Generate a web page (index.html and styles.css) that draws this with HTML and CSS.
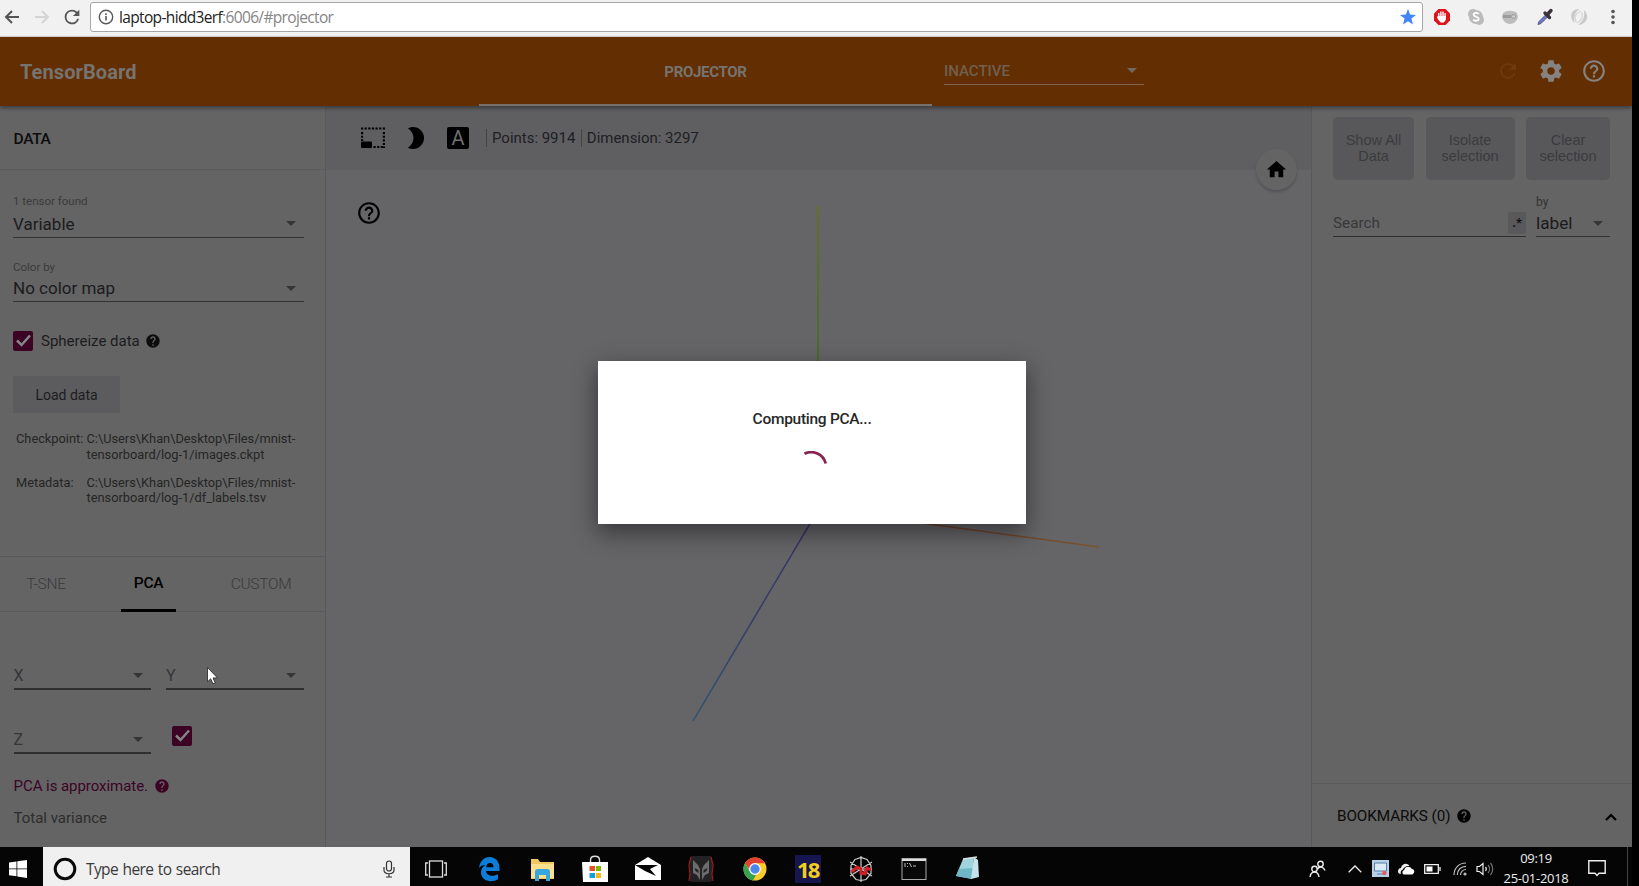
FILE: index.html
```html
<!DOCTYPE html>
<html lang="en">
<head>
<meta charset="utf-8">
<title>TensorBoard</title>
<link rel="stylesheet" href="styles.css">
</head>
<body>
<svg class="defs" width="0" height="0">
  <symbol id="help" viewBox="0 0 24 24"><path d="M12 2C6.48 2 2 6.48 2 12s4.48 10 10 10 10-4.48 10-10S17.52 2 12 2zm1 17h-2v-2h2v2zm2.07-7.75l-.9.92C13.45 12.9 13 13.5 13 15h-2v-.5c0-1.1.45-2.1 1.17-2.83l1.24-1.26c.37-.36.59-.86.59-1.41 0-1.1-.9-2-2-2s-2 .9-2 2H8c0-2.21 1.79-4 4-4s4 1.79 4 4c0 .88-.36 1.68-.93 2.25z"/></symbol>
  <symbol id="help-outline" viewBox="0 0 24 24"><path d="M11 18h2v-2h-2v2zm1-16C6.48 2 2 6.48 2 12s4.48 10 10 10 10-4.48 10-10S17.52 2 12 2zm0 18c-4.41 0-8-3.59-8-8s3.59-8 8-8 8 3.59 8 8-3.59 8-8 8zm0-14c-2.21 0-4 1.79-4 4h2c0-1.1.9-2 2-2s2 .9 2 2c0 2-3 1.75-3 5h2c0-2.25 3-2.5 3-5 0-2.21-1.79-4-4-4z"/></symbol>
  <symbol id="caret" viewBox="0 0 10 5"><path d="M0 0h10L5 5z"/></symbol>
  <symbol id="refresh" viewBox="0 0 24 24"><path d="M17.65 6.35A7.96 7.96 0 0 0 12 4a8 8 0 1 0 7.73 10h-2.08A6 6 0 1 1 12 6c1.66 0 3.14.69 4.22 1.78L13 11h7V4l-2.35 2.35z"/></symbol>
  <symbol id="check" viewBox="0 0 20 20"><path d="M4 9.500l4.500 4.500 8.500-9.500" fill="none" stroke="#858585" stroke-width="2.500"/></symbol>
</svg>
<div class="screen">
  <div class="browser">
    <svg class="nav" width="20" height="20" viewBox="0 0 20 20"><path d="M17 10H4M10 4l-6 6 6 6" fill="none" stroke="#555" stroke-width="2"/></svg>
    <svg class="nav" width="20" height="20" viewBox="0 0 20 20"><path d="M3 10h13M10 4l6 6-6 6" fill="none" stroke="#d4d4d4" stroke-width="2"/></svg>
    <svg class="nav reload" width="22" height="22"><use href="#refresh"/></svg>
    <div class="address">
      <svg width="16" height="16" viewBox="0 0 16 16" fill="none" stroke="#5a5a5a"><circle cx="8" cy="8" r="6.7" stroke-width="1.4"/><path d="M8 7v4.5M8 4.2v1.7" stroke-width="1.6"/></svg>
      <span class="url">laptop-hidd3erf<i>:6006/#projector</i></span>
      <svg class="star" width="16" height="16" viewBox="0 0 16 16"><path d="M8 0l2.2 5.6 5.8.3-4.6 3.7L13 15.600 8 12.300 3 15.600l1.600-6L0 5.900l5.800-.3z" fill="#4285f4"/></svg>
    </div>
    <div class="extensions">
      <svg width="18" height="18" viewBox="0 0 18 18"><path d="M5.500 1h7L17 5.500v7L12.500 17h-7L1 12.500v-7z" fill="#e0121c"/><path d="M5.800 9V5.500M7.900 9V4M10 9V4M12.100 10V5.500" stroke="#fff" stroke-width="1.400" stroke-linecap="round"/><path d="M5.100 8h7.700v4l-2 2.600H7.700L5.100 11.500 3.800 9z" fill="#fff"/></svg>
      <svg width="18" height="18" viewBox="0 0 18 18"><circle cx="6" cy="6" r="5" fill="#bbb"/><circle cx="12" cy="12" r="5" fill="#bbb"/><circle cx="9" cy="9" r="7" fill="#bbb"/><path d="M11.700 6C10.500 4.200 6.500 4.500 6.700 6.800c.2 2.500 5 1.500 5 4 0 2.300-4.300 2.600-5.400.7" fill="none" stroke="#fff" stroke-width="1.800"/></svg>
      <svg width="18" height="18" viewBox="0 0 18 18"><path d="M2 5c4-3 10-3 14 0l1 4c-1 4-4 7-8 7S2 13 1 9z" fill="#bdbdbd"/><path d="M2 8.500h8" stroke="#9c9c9c" stroke-width="3"/><circle cx="12.500" cy="8.500" r="2" fill="#ccc" stroke="#999"/></svg>
      <svg width="18" height="18" viewBox="0 0 18 18"><path d="M2 16.500l1-3 6.500-6.500 2 2L5 15.500z" fill="#6c78cf" stroke="#555b80"/><path d="M9 5l4.500 4.500M11 7l4-4.500" stroke="#3a3238" stroke-width="3.400" stroke-linecap="round"/></svg>
      <svg width="18" height="18" viewBox="0 0 18 18" fill="#cacaca"><path d="M9.500 1C0 1-1 10 4.500 15 4 9 4.500 4.500 9.500 1z"/><path d="M8 17c9-.5 12-10 6-15 1 7-1 11.500-6 15z"/><path d="M6 14c-2-5 0-9 5-11M11.500 4c2 5 0 9-5 11" fill="none" stroke="#d8d8d8" stroke-width="1.300"/></svg>
      <svg width="18" height="18" viewBox="0 0 18 18" fill="#555"><circle cx="9" cy="3.500" r="1.800"/><circle cx="9" cy="9" r="1.800"/><circle cx="9" cy="14.500" r="1.800"/></svg>
    </div>
  </div>

  <header class="topbar">
    <div class="brand">TensorBoard</div>
    <div class="tab">PROJECTOR</div>
    <div class="inactive"><span>INACTIVE</span><svg width="10" height="5"><use href="#caret"/></svg></div>
    <div class="actions">
      <svg class="dim" width="24" height="24"><use href="#refresh"/></svg>
      <svg width="26" height="26" viewBox="0 0 24 24"><path d="M19.430 12.980c.04-.32.07-.64.07-.98s-.03-.66-.07-.98l2.110-1.650c.19-.15.24-.42.12-.64l-2-3.460c-.12-.22-.39-.3-.61-.22l-2.490 1c-.52-.4-1.080-.73-1.690-.98l-.38-2.650C14.460 2.180 14.250 2 14 2h-4c-.25 0-.46.180-.49.420l-.38 2.650c-.61.25-1.170.59-1.690.98l-2.490-1c-.23-.09-.49 0-.61.22l-2 3.460c-.13.22-.07.49.12.64l2.110 1.650c-.04.32-.07.65-.07.98s.03.66.07.98l-2.110 1.650c-.19.15-.24.42-.12.64l2 3.460c.12.22.39.3.61.22l2.490-1c.52.4 1.080.73 1.690.98l.38 2.650c.03.24.24.42.49.42h4c.25 0 .46-.18.49-.42l.38-2.650c.61-.25 1.170-.59 1.690-.98l2.490 1c.23.09.49 0 .61-.22l2-3.460c.12-.22.07-.49-.12-.64l-2.110-1.650zM12 15.500c-1.930 0-3.500-1.570-3.500-3.500s1.570-3.500 3.500-3.500 3.500 1.570 3.500 3.500-1.570 3.500-3.500 3.500z"/></svg>
      <svg width="26" height="26"><use href="#help-outline"/></svg>
    </div>
  </header>

  <main class="workspace">
    <aside class="left">
      <h2 class="panel-title">DATA</h2>
      <div class="data">
        <label class="caption">1 tensor found</label>
        <div class="select"><span>Variable</span><svg width="10" height="5"><use href="#caret"/></svg></div>
        <label class="caption second">Color by</label>
        <div class="select"><span>No color map</span><svg width="10" height="5"><use href="#caret"/></svg></div>
        <div class="sphere"><span class="box"><svg width="20" height="20"><use href="#check"/></svg></span><span class="sphere-text">Sphereize data</span><svg class="q" width="16" height="16"><use href="#help"/></svg></div>
        <div class="load">Load data</div>
        <dl class="files">
          <dt>Checkpoint:</dt><dd>C:\Users\Khan\Desktop\Files/mnist-<br>tensorboard/log-1/images.ckpt</dd>
          <dt>Metadata:</dt><dd>C:\Users\Khan\Desktop\Files/mnist-<br>tensorboard/log-1/df_labels.tsv</dd>
        </dl>
      </div>
      <nav class="tabs"><span class="t1">T-SNE</span><span class="t2">PCA</span><span class="t3">CUSTOM</span></nav>
      <div class="pca">
        <div class="axes">
          <div class="select axis"><span>X</span><svg width="10" height="5"><use href="#caret"/></svg></div>
          <div class="select axis"><span>Y</span><svg width="10" height="5"><use href="#caret"/></svg></div>
          <div class="select axis"><span>Z</span><svg width="10" height="5"><use href="#caret"/></svg></div>
          <span class="box z"><svg width="20" height="20"><use href="#check"/></svg></span>
        </div>
        <div class="approx"><span>PCA is approximate.</span><svg class="q" width="16" height="16"><use href="#help"/></svg></div>
        <div class="variance">Total variance</div>
      </div>
    </aside>

    <section class="center">
      <div class="tools">
        <svg width="24" height="22" viewBox="0 0 24 22"><path d="M0 1.500h24" stroke="#000" stroke-width="2.200" stroke-dasharray="2.200 1.430"/><path d="M1.100 5v9M22.900 5v16" stroke="#000" stroke-width="2.200" stroke-dasharray="2.200 1.430"/><path d="M12.500 20h11" stroke="#000" stroke-width="2.200" stroke-dasharray="2.200 1.430"/><rect y="14.500" width="11" height="6.500" rx="1"/></svg>
        <svg class="moon" width="16" height="22" viewBox="0 0 16 22"><path d="M0 1.300C2 .3 3.500 0 5 0a11 11 0 0 1 0 22c-1.500 0-3-.3-5-1.300C3.300 18.500 5.500 15 5.500 11S3.300 3.500 0 1.300z"/></svg>
        <span class="letter">A</span>
        <span class="stat">Points: 9914</span><span class="stat">Dimension: 3297</span>
      </div>
      <svg class="plot" width="985" height="678" viewBox="0 0 985 678">
        <defs>
          <linearGradient id="gy" x1="0" y1="36" x2="0" y2="340" gradientUnits="userSpaceOnUse"><stop offset="0" stop-color="#66701f"/><stop offset=".5" stop-color="#436d24"/><stop offset="1" stop-color="#2f6d2a"/></linearGradient>
          <linearGradient id="gb" x1="491" y1="341" x2="367" y2="551" gradientUnits="userSpaceOnUse"><stop offset="0" stop-color="#38306a"/><stop offset=".5" stop-color="#343b66"/><stop offset="1" stop-color="#325670"/></linearGradient>
          <linearGradient id="go" x1="600" y1="0" x2="773" y2="0" gradientUnits="userSpaceOnUse"><stop offset="0" stop-color="#67392a"/><stop offset="1" stop-color="#7a532b"/></linearGradient>
        </defs>
        <path d="M492 36V340" stroke="url(#gy)" stroke-width="1.800"/>
        <path d="M491.500 341L367 551" stroke="url(#gb)" stroke-width="1.500"/>
        <path d="M491 339L773 377" stroke="url(#go)" stroke-width="1.500"/>
      </svg>
      <svg class="guide" width="26" height="26"><use href="#help-outline"/></svg>
      <span class="home"><svg width="23" height="23" viewBox="0 0 24 24"><path d="M10 20v-6h4v6h5v-8h3L12 3 2 12h3v8z"/></svg></span>
    </section>

    <aside class="right">
      <div class="buttons"><span>Show All<br>Data</span><span>Isolate<br>selection</span><span>Clear<br>selection</span></div>
      <div class="query">
        <div class="search"><span>Search</span><b>.*</b></div>
        <div class="by"><label>by</label><div class="select"><span>label</span><svg width="10" height="5"><use href="#caret"/></svg></div></div>
      </div>
      <div class="bookmarks"><span>BOOKMARKS (0)</span><svg class="q" width="16" height="16"><use href="#help"/></svg><svg class="chev" width="12" height="8" viewBox="0 0 12 8"><path d="M1 7l5-5 5 5" fill="none" stroke="#000" stroke-width="2.200"/></svg></div>
    </aside>
  </main>

  <div class="dialog">
    <p>Computing PCA...</p>
    <svg width="30" height="30" viewBox="0 0 30 30"><path d="M7.500 2.800A15 15 0 0 1 28.700 12.500" fill="none" stroke="#872452" stroke-width="2.800"/></svg>
  </div>
  <svg class="cursor" width="12" height="18" viewBox="0 0 12 18"><path d="M.5.5v14.300l3.200-3 2.300 5 2.200-1-2.200-4.900h4.500z" fill="#fff" stroke="#222" stroke-width=".8"/></svg>
</div>

<footer class="taskbar">
  <div class="start"><svg width="18" height="18" viewBox="0 0 18 18" fill="#fff"><path d="M0 2.500l7.500-1v7H0zM8.300 1.300L18 0v8.500H8.300zM0 9.300h7.500v7L0 15.300zM8.300 9.300H18V18l-9.700-1.400z"/></svg></div>
  <div class="find">
    <svg width="24" height="24" viewBox="0 0 24 24"><circle cx="12" cy="12" r="9.800" fill="none" stroke="#0a0a0a" stroke-width="3"/></svg>
    <span>Type here to search</span>
    <svg class="mic" width="12" height="18" viewBox="0 0 12 18" fill="none" stroke="#333" stroke-width="1.200"><rect x="3.500" y="1" width="5" height="10" rx="2.500"/><path d="M1 7v3c0 5 10 5 10 0V7M6 14v3M3 17h6"/></svg>
  </div>
  <div class="apps">
    <svg width="26" height="26" viewBox="0 0 26 26" fill="none" stroke="#ddd" stroke-width="1.300"><rect x="6.500" y="5" width="13" height="16"/><path d="M5 7H2.700v12H5M21 7h2.300v12H21"/></svg>
    <svg width="26" height="26" viewBox="0 0 26 26"><path d="M3 12C4 5 8 1 13.500 1 20 1 23.500 6 23.500 12v3H10c.2 3.200 3 4.700 6 4.700 2.500 0 4.500-.6 6-1.500v5C16 27 4.500 25.500 5 16c.2-3 1.800-5.500 4.500-7C6.500 9 4.300 10.300 3 12zm7.200-.8h7.300c0-3-1.300-4.200-3.500-4.200s-3.500 1.500-3.800 4.200z" fill="#0d7dd8"/></svg>
    <svg width="26" height="26" viewBox="0 0 26 26"><path d="M2 3h7l2 3h14v17H2z" fill="#f0c860"/><path d="M2 8h23v14H2z" fill="#fbe08e"/><path d="M6 25v-9a3 3 0 0 1 3-3h9a3 3 0 0 1 3 3v9h-4v-6h-7v6z" fill="#35a6e0"/></svg>
    <svg width="26" height="28" viewBox="0 0 26 28"><path d="M8.500 8V5c0-5 9-5 9 0v3" fill="none" stroke="#ddd" stroke-width="1.400"/><path d="M0 7h26v20H1z" fill="#fff"/><path d="M7.500 11H13v5H7.500z" fill="#e55125"/><path d="M14 11h5v5h-5z" fill="#7eb900"/><path d="M7.500 18H13v5H7.500z" fill="#159ee0"/><path d="M14 18h5v5h-5z" fill="#fbba13"/></svg>
    <svg width="26" height="26" viewBox="0 0 26 26"><path d="M0 9L13 1l13 8v15H0z" fill="#fff"/><path d="M0 9h23l-8 4 6 7-11-5z" fill="#050505"/></svg>
    <svg width="26" height="26" viewBox="0 0 26 26"><path d="M2 1l2-1h18l2 1v24l-2 1H4l-2-1z" fill="#222224"/><path d="M3 1L1 9l1 9-1 7M23 1l2 8-1 9 1 7" fill="none" stroke="#a21a20" stroke-width="1.200"/><path d="M5 4l5 5 2 4v11l-3-5-4-2zM21 4l-5 5-2 4v11l3-5 4-2z" fill="#6c6c6c"/><path d="M6.500 12l4 2v3l-3-2zM19.500 12l-4 2v3l3-2z" fill="#222"/></svg>
    <svg width="26" height="26" viewBox="0 0 26 26"><circle cx="13" cy="13" r="11.500" fill="#fccb28"/><path d="M3 7.200A11.500 11.500 0 0 1 23 7.300H13l-5 7z" fill="#df4132"/><path d="M3 7.200l5.500 9.300 6 1.500-3.500 6.400A11.500 11.500 0 0 1 3 7.200z" fill="#35a252"/><circle cx="13" cy="13" r="5.300" fill="#4d87ed" stroke="#fff" stroke-width="1.200"/></svg>
    <span class="eighteen">18</span>
    <svg width="26" height="28" viewBox="0 0 26 28"><g fill="none" stroke="#ccc" stroke-width="1.200"><path d="M13 1v26M2 7l22 14M24 7L2 21M2 14h22M7 4.500l6-2 6 2 4 6v8l-5 6-5 1-5-1-5-6v-8z"/></g><path d="M4 17l5-5 4 2v4l4 1 2-6 4 2" fill="none" stroke="#d51c24" stroke-width="3"/></svg>
    <svg width="26" height="24" viewBox="0 0 26 24"><rect x="1" y="1.500" width="24" height="21" fill="#080808" stroke="#aaa"/><path d="M1 3h24" stroke="#ddd" stroke-width="2"/><path d="M4 6v4M6.500 6v1M6.500 9v1M8.500 6l2 4M12 9h3" stroke="#bbb"/></svg>
    <svg width="26" height="26" viewBox="0 0 26 26"><path d="M9 3l11-2-2 22-16-3z" fill="#9fd4df"/><path d="M5 13l14-1-1 11-16-3z" fill="#6fb6c6"/><path d="M20 1l4 3 1 17-8 2z" fill="#c5e3e8"/><path d="M9 3l14-2" stroke="#ddd" stroke-width="1.500"/></svg>
  </div>
  <div class="tray">
    <svg class="people" width="18" height="18" viewBox="0 0 18 18" fill="none" stroke="#eee" stroke-width="1.400"><circle cx="11.500" cy="4" r="2.700"/><path d="M8.500 9c2-3 6-2.500 7.500 1.500"/><circle cx="5.500" cy="9" r="2.700"/><path d="M1 17c1-6.500 8-6.500 9 0"/></svg>
    <svg class="up" width="14" height="8" viewBox="0 0 14 8"><path d="M.7 7.300L7 1l6.300 6.300" fill="none" stroke="#eee" stroke-width="1.300"/></svg>
    <svg class="rec" width="17" height="17" viewBox="0 0 17 17"><path d="M0 0h17v17H0z" fill="#b6d0ea"/><path d="M2.500 3h12v8h-12zM5 14h7" fill="#dbe9f6" stroke="#5a7ea5"/><circle cx="12.500" cy="13" r="2.200" fill="#e55b60"/></svg>
    <svg class="cloud" width="17" height="12" viewBox="0 0 17 12"><path d="M0 8.500C0 6 1.500 5 3 5c.5-4 6-6 8.500-2C7 3 5.500 5 5 6.500 3 7 2.500 8.500 2.800 11 1 11 0 10 0 8.500z" fill="#eee"/><path d="M5.500 11.500a2.500 2.500 0 0 1 .8-4.500c.6-4 6-4 7.200-1.200a2.900 2.900 0 0 1 .7 5.700z" fill="#fff"/></svg>
    <svg class="bat" width="17" height="10" viewBox="0 0 17 10"><path d="M.7.700h13.600v8.600H.7zM16 3v4" fill="none" stroke="#eee" stroke-width="1.300"/><path d="M2.500 2.500h6v5h-6z" fill="#fff"/></svg>
    <svg class="wifi" width="14" height="14" viewBox="0 0 14 14" fill="none" stroke="#bbb" stroke-width="1.200"><path d="M1 13C1 6 6 1 13 1M4.300 13c0-5 3.700-8.700 8.700-8.700M7.500 13c0-3 2.500-5.500 5.500-5.500"/><circle cx="12" cy="12" r="1" fill="#eee"/></svg>
    <svg class="vol" width="18" height="14" viewBox="0 0 18 14" fill="none" stroke="#eee" stroke-width="1.200"><path d="M1 4.500h2.500L7 1.500v11L3.500 9.500H1z"/><path d="M9.500 5c1 1.200 1 2.800 0 4"/><path d="M12 3c2 2.300 2 5.700 0 8M14.500 1c3 3.500 3 8.500 0 12" stroke="#777"/></svg>
    <div class="clock"><span>09:19</span><span>25-01-2018</span></div>
    <svg class="note" width="18" height="17" viewBox="0 0 18 17"><path d="M.8.800h16.400v12.400H11L9 15.500 7 13.200H.8z" fill="none" stroke="#eee" stroke-width="1.400"/></svg>
  </div>
</footer>
</body>
</html>
```
FILE: styles.css
```css
* { box-sizing: border-box; }
body { margin: 0; width: 1639px; height: 886px; overflow: hidden; background: #000; font-family: Roboto, "Liberation Sans", sans-serif; color: #1c1c1e; }
svg { display: block; flex: none; }
.defs { position: absolute; }
.screen { position: relative; width: 1632px; height: 847px; display: flex; flex-direction: column; background: #646464; white-space: nowrap; }

/* Browser chrome */
.browser { height: 37px; background: #f2f1f2; border-bottom: 1px solid #d5d5d5; display: flex; align-items: center; padding: 0 0 2px 2px; }
.nav { margin-right: 10px; }
.reload { fill: #555; margin: 0 7px 0 -1px; }
.address { width: 1333px; height: 30px; border: 1px solid #a6a6aa; border-radius: 3px; background: #fff; display: flex; align-items: center; padding: 0 6px 0 7px; }
.url { font: 15.5px/28px "Open Sans", "Noto Sans", sans-serif; letter-spacing: -.65px; color: #222; margin-left: 5px; }
.url i { font-style: normal; color: #858585; }
.star { margin-left: auto; }
.extensions { display: flex; gap: 16.200px; margin-left: 10px; }

/* TensorBoard header */
.topbar { height: 69px; background: #622e02; color: #777370; fill: #858280; display: flex; position: relative; z-index: 1; box-shadow: 0 2px 4px rgba(0,0,0,.4); }
.brand { width: 479px; padding-left: 20px; font-size: 20px; font-weight: 700; letter-spacing: .1px; line-height: 70px; }
.tab { width: 453px; border-bottom: 2px solid #77706b; text-align: center; font-size: 15px; font-weight: 700; line-height: 70px; letter-spacing: -.3px; }
.inactive { margin: 18px 0 0 12px; width: 200px; height: 30px; border-bottom: 1px solid #81644b; display: flex; justify-content: space-between; align-items: center; font-size: 15px; font-weight: 500; padding: 2px 7px 0 0; color: #70604f; fill: #75695f; }
.actions { margin-left: auto; display: flex; align-items: center; gap: 17px; padding: 0 25px 1px 0; }
.dim { fill: #6e3810; margin-right: 1px; }

.workspace { flex: 1; display: flex; }
.left { width: 326px; border-right: 1px solid #59595b; }
.panel-title { margin: 0; height: 64px; border-bottom: 1px solid #5b5b5d; padding-left: 13.500px; font-size: 15.500px; font-weight: 500; line-height: 66px; letter-spacing: -.3px; color: #0c0c0c; }
.data { height: 386px; padding: 23px 21px 0 13px; }
.caption { display: block; height: 17px; line-height: 17px; font-size: 11.500px; color: #3b3b3b; }
.second { margin-top: 21px; }
.select { height: 28px; border-bottom: 1px solid #333335; display: flex; align-items: center; justify-content: space-between; padding: 2px 8px 0 0; font-size: 17px; color: #1b1b1d; fill: #353535; }
.data .select { padding-top: 0; }
.data .second + .select { height: 26px; padding-bottom: 1px; }
.sphere { display: flex; align-items: center; margin-top: 29px; height: 20px; font-size: 15px; fill: #0d0d0d; }
.box { width: 20px; height: 20px; border-radius: 2px; background: #3c0324; }
.sphere-text { margin: 0 5px 0 8px; }
.load { margin-top: 25px; width: 107px; height: 37px; background: #5c5c5f; text-align: center; line-height: 38px; font-size: 14px; }
.files { margin: 18px 0 0 3px; display: grid; grid-template-columns: 70.500px 1fr; row-gap: 12.500px; font-size: 12.800px; line-height: 15.600px; color: #252525; }
.files dd { margin: 0; }
.tabs { height: 56px; border-top: 1px solid #58585a; border-bottom: 1px solid #5a5a5c; display: flex; font-size: 15.500px; line-height: 54px; color: #3a3a3c; font-weight: 300; }
.tabs span { height: 55px; text-align: center; letter-spacing: -.3px; }
.t1 { width: 121px; padding-right: 29px; }
.tabs .t2 { width: 55px; border-bottom: 3px solid #000; color: #000; font-weight: 500; line-height: 52px; }
.t3 { width: 149px; padding-left: 21px; }
.pca { padding: 49px 21px 0 13.500px; }
.axes { display: grid; grid-template-columns: 137.500px 138px; column-gap: 15px; row-gap: 35px; }
.axis { height: 29px; color: #353537; font-size: 16px; border-bottom-width: 2px; border-color: #2f2f31; }
.z { margin: 1px 0 0 6px; }
.approx { display: flex; align-items: center; margin-top: 20px; height: 24px; gap: 6px; color: #3c0324; fill: #3c0324; font-size: 15px; letter-spacing: -.05px; }
.variance { line-height: 24px; margin-top: 8px; font-size: 15px; color: #2d2d2d; }

/* Scatter plot area */
.center { flex: 1; position: relative; background: #656568; }
.tools { height: 64px; background: #5f5f62; display: flex; align-items: center; padding: 0 0 1px 35px; color: #202022; }
.moon { margin-left: 23px; }
.letter { width: 22px; height: 22px; margin: 0 17px 0 23px; background: #000; border-radius: 2px; color: #707070; font-size: 20px; font-weight: 400; line-height: 23px; text-align: center; }
.stat { border-left: 1px solid #444; height: 18px; line-height: 19px; font-size: 15px; letter-spacing: -.02px; padding: 0 5.500px 0 5px; }
.plot { position: absolute; left: 0; top: 64px; }
.guide { position: absolute; left: 30px; top: 94px; }
.home { position: absolute; left: 930px; top: 43px; width: 41px; height: 41px; border-radius: 50%; background: #646464; box-shadow: 0 2px 3px rgba(0,0,0,.2); display: grid; place-items: center; }

.right { width: 321px; border-left: 1px solid #58585a; display: flex; flex-direction: column; }
.buttons { display: grid; grid-template-columns: 81px 89px 84px; gap: 11.500px; padding: 11px 0 0 21px; }
.buttons span { height: 63px; border-radius: 5px; background: #58585a; color: #3b3b3d; font: 14.500px/16px "Liberation Sans", Arial, sans-serif; text-align: center; padding-top: 15px; }
.query { display: flex; gap: 10px; padding: 14px 0 0 21px; }
.search { width: 193px; height: 43px; border-bottom: 1px solid #303032; display: flex; justify-content: space-between; align-items: flex-end; font-size: 15.300px; color: #38383a; line-height: 26px; }
.search b { width: 18px; height: 22px; margin-bottom: 2px; background: #59595c; color: #111; text-align: center; font-size: 13px; line-height: 22px; border-radius: 2px; }
.by { width: 74px; }
.by label { display: block; font-size: 12px; line-height: 17px; height: 16px; color: #323234; }
.by .select { height: 27px; padding: 0 7px 0 0; font-size: 17.200px; }
.bookmarks { height: 64px; margin-top: auto; border-top: 1px solid #58585a; display: flex; align-items: center; gap: 6px; padding: 1px 0 0 25px; font-size: 15.300px; letter-spacing: -.1px; color: #0b0b0b; }
.chev { margin: 2px 15px 0 auto; }

.dialog { position: absolute; z-index: 2; left: 598px; top: 361px; width: 428px; height: 163px; background: #fff; box-shadow: 0 8px 22px 1px rgba(0,0,0,.45); display: flex; flex-direction: column; align-items: center; padding-top: 46px; }
.dialog p { margin: 0 0 20px; line-height: 24px; font-size: 15.500px; font-weight: 500; letter-spacing: -.28px; color: #272727; }
.cursor { position: absolute; left: 207px; top: 667px; }

/* Windows taskbar */
.taskbar { width: 1632px; height: 39px; background: #050506; display: flex; white-space: nowrap; }
.start { width: 43px; padding: 13px 0 0 9px; }
.find { width: 367px; background: #f1f0f1; display: flex; align-items: center; padding: 4px 15px 0 10px; color: #3a3a3a; font: 15.500px "Open Sans", "Noto Sans", sans-serif; }
.find span { margin-left: 9px; letter-spacing: -.6px; word-spacing: 1px; }
.mic { margin-left: auto; }
.apps { width: 582px; display: flex; justify-content: space-between; align-items: center; padding: 5px 12px 0 13px; }
.eighteen { width: 26px; height: 28px; background: #17154d; color: #f2cf1d; font: bold 22px/28px "Open Sans", sans-serif; text-align: center; letter-spacing: -2px; }
.tray { width: 636px; display: flex; align-items: center; padding-top: 4px; border-right: 1px solid #444; }
.people { margin-left: 317px; }
.up { margin-left: 21px; }
.rec { margin-left: 10px; }
.cloud { margin-left: 9px; }
.bat { margin-left: 9px; }
.wifi { margin-left: 12px; }
.vol { margin-left: 9px; }
.clock { display: flex; flex-direction: column; align-items: center; color: #eee; font: 13px/19.500px "Open Sans", "Noto Sans", sans-serif; width: 66px; margin-left: 9px; letter-spacing: -.3px; }
.note { margin-left: 19px; }
```
